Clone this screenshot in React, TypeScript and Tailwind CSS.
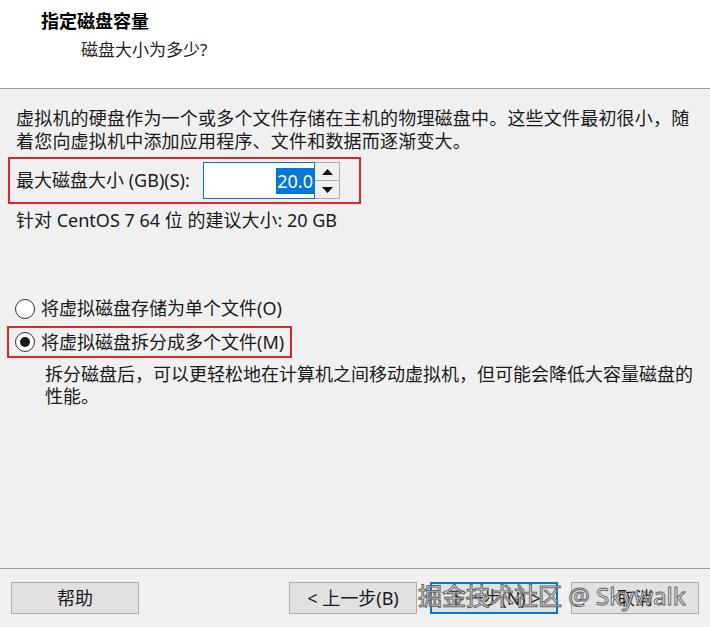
import { useState } from "react";

const font = "font-['Noto_Sans','Noto_Sans_CJK_SC',sans-serif]";

function Radio({ checked, label }: { checked: boolean; label: string }) {
  return (
    <label className="flex items-center gap-[6px] h-[23px]">
      <span className="w-[20px] h-[20px] rounded-full border border-[#333] bg-white flex items-center justify-center">
        {checked && <span className="w-[10px] h-[10px] rounded-full bg-[#1a1a1a]" />}
      </span>
      <span className="text-[18px] leading-[23px] text-[#1a1a1a]">{label}</span>
    </label>
  );
}

function Button({ children, primary }: { children: React.ReactNode; primary?: boolean }) {
  return (
    <button
      className={
        "w-[128px] h-[32px] bg-[#e1e1e1] text-[18px] text-[#1a1a1a] flex items-center justify-center " +
        (primary ? "border-2 border-[#0078d7]" : "border border-[#adadad]")
      }
    >
      {children}
    </button>
  );
}

export default function App() {
  const [split] = useState(true);

  return (
    <div className={`relative w-[710px] h-[627px] bg-[#f0f0f0] flex flex-col ${font}`}>
      <header className="h-[89px] bg-white border-b border-[#a0a0a0] pl-[41px] pt-[8px]">
        <div className="text-[18px] leading-[26px] font-bold text-black">指定磁盘容量</div>
        <div className="pl-[40px] mt-[5px] text-[17px] leading-[22px] text-[#222]">磁盘大小为多少?</div>
      </header>

      <main className="flex-1 px-4 pt-[18px] text-[#1a1a1a]">
        <p className="text-[18px] leading-[23px] tracking-[0.2px]">
          虚拟机的硬盘作为一个或多个文件存储在主机的物理磁盘中。这些文件最初很小，随
          <br />
          着您向虚拟机中添加应用程序、文件和数据而逐渐变大。
        </p>

        <div className="mt-[4px] -ml-2 w-[353px] h-[47px] border-2 border-[#e0242c] pl-[6px] flex items-center">
          <span className="text-[18px] leading-[23px] w-[187px]">最大磁盘大小 (GB)(S):</span>
          <div className="flex h-[37px]">
            <div className="w-[112px] h-full bg-white border border-[#0078d7] flex items-center justify-end">
              <span className="bg-[#0078d7] text-white text-[18px] leading-[26px] px-[1px]">20.0</span>
            </div>
            <div className="w-[25px] h-full flex flex-col border border-l-0 border-[#adadad] bg-[#f0f0f0]">
              <div className="flex-1 flex items-center justify-center border-b border-[#adadad]">
                <svg width="11" height="6" viewBox="0 0 11 6"><path d="M5.5 0L11 6H0Z" fill="#111" /></svg>
              </div>
              <div className="flex-1 flex items-center justify-center">
                <svg width="11" height="6" viewBox="0 0 11 6"><path d="M0 0H11L5.5 6Z" fill="#111" /></svg>
              </div>
            </div>
          </div>
        </div>

        <p className="mt-[5px] text-[18px] leading-[23px]">针对 CentOS 7 64 位 的建议大小: 20 GB</p>

        <div className="mt-[65px] -ml-[1px]">
          <Radio checked={!split} label="将虚拟磁盘存储为单个文件(O)" />
        </div>
        <div className="mt-[6px] -ml-[9px] w-[285px] h-[32px] border-2 border-[#e0242c] pl-[6px] flex items-center">
          <Radio checked={split} label="将虚拟磁盘拆分成多个文件(M)" />
        </div>
        <p className="mt-[5px] pl-[29px] text-[18px] leading-[22px]">
          拆分磁盘后，可以更轻松地在计算机之间移动虚拟机，但可能会降低大容量磁盘的
          <br />
          性能。
        </p>
      </main>

      <footer className="h-[59px] border-t border-[#a0a0a0] px-[11px] pt-[13px] flex">
        <Button>帮助</Button>
        <div className="ml-auto flex gap-[13px]">
          <Button>&lt; 上一步(B)</Button>
          <Button primary>下一步(N) &gt;</Button>
          <Button>取消</Button>
        </div>
      </footer>

      <div className="absolute left-[418px] top-[579px] text-[24px] leading-[34px] text-white/70 [-webkit-text-stroke:1px_#666] whitespace-nowrap pointer-events-none">
        掘金技术社区 @ Skywalk
      </div>
    </div>
  );
}
